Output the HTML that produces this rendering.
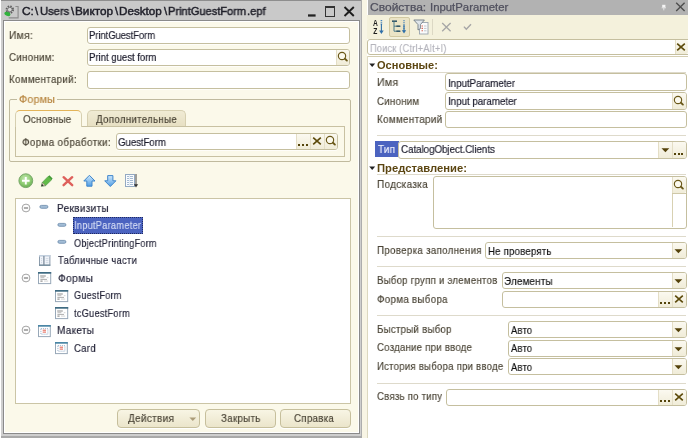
<!DOCTYPE html>
<html lang="ru"><head><meta charset="utf-8"><title>PrintGuestForm.epf</title>
<style>
html,body{margin:0;padding:0;background:#fff}
body{width:688px;height:438px;position:relative;overflow:hidden;font-family:"Liberation Sans",sans-serif}
body>div,body>svg,body>span{position:absolute}
.t{-webkit-text-stroke:0.18px currentColor;white-space:nowrap;line-height:16px;transform-origin:0 0;display:block;will-change:transform}
</style></head><body>
<div style="left:1px;top:0px;width:361px;height:438px;background:#cecece"></div>
<div style="left:1px;top:0px;width:361px;height:20px;background:#c9c9c9;border-top:1px solid #8e8e8e;box-sizing:border-box"></div>
<div style="left:360.6px;top:0px;width:1.4px;height:438px;background:#adadad"></div>
<div style="left:1px;top:436px;width:361px;height:2px;background:#a9a9a9"></div>
<div style="left:2.6px;top:19.6px;width:357.2px;height:414.6px;background:#fff;border:1.2px solid #8a8a8a;box-sizing:border-box"></div>
<div style="left:4.5px;top:21.5px;width:353.4px;height:410.8px;background:#fbf9ea"></div>
<div style="left:362.4px;top:0px;width:5px;height:438px;background:#f8f5e5"></div>
<div style="left:366.5px;top:56px;width:0.9px;height:382px;background:#dcd8c0"></div>
<svg style="left:4px;top:4px" width="16" height="16" viewBox="0 0 16 16">
<path d="M11.4 2.5h2.7v11.4h-9.4" fill="none" stroke="#8c8c8c" stroke-width="1.1"/>
<circle cx="5.8" cy="5.6" r="3.3" fill="none" stroke="#5e5e5e" stroke-width="1.9" stroke-dasharray="1.5 1.1"/>
<circle cx="5.8" cy="5.6" r="2.3" fill="#d4d4d4" stroke="#6c6c6c" stroke-width="0.9"/>
<ellipse cx="3.4" cy="9.9" rx="3.1" ry="2" fill="#30b23c" transform="rotate(20 3.4 9.9)"/>
</svg>
<span class="t" style="left:22.41px;top:3.00px;font-size:11.5px;color:#20202a;transform:scaleX(1.0313);-webkit-text-stroke:0.45px #20202a;">C:</span>
<span class="t" style="left:35.10px;top:3.00px;font-size:11.5px;color:#20202a;transform:scaleX(0.9938);-webkit-text-stroke:0.45px #20202a;">\</span>
<span class="t" style="left:39.76px;top:3.00px;font-size:11.5px;color:#20202a;transform:scaleX(0.9739);-webkit-text-stroke:0.45px #20202a;">Users</span>
<span class="t" style="left:70.65px;top:3.00px;font-size:11.5px;color:#20202a;transform:scaleX(0.9938);-webkit-text-stroke:0.45px #20202a;">\</span>
<span class="t" style="left:74.76px;top:3.00px;font-size:11.5px;color:#20202a;transform:scaleX(1.0233);-webkit-text-stroke:0.45px #20202a;">Виктор</span>
<span class="t" style="left:115.10px;top:3.00px;font-size:11.5px;color:#20202a;transform:scaleX(0.9938);-webkit-text-stroke:0.45px #20202a;">\</span>
<span class="t" style="left:119.27px;top:3.00px;font-size:11.5px;color:#20202a;transform:scaleX(1.0131);-webkit-text-stroke:0.45px #20202a;">Desktop</span>
<span class="t" style="left:164.35px;top:3.00px;font-size:11.5px;color:#20202a;transform:scaleX(0.9938);-webkit-text-stroke:0.45px #20202a;">\</span>
<span class="t" style="left:168.11px;top:3.00px;font-size:11.5px;color:#20202a;transform:scaleX(0.9632);-webkit-text-stroke:0.45px #20202a;">PrintGuestForm</span>
<span class="t" style="left:247.40px;top:3.00px;font-size:11.5px;color:#20202a;transform:scaleX(0.9686);-webkit-text-stroke:0.45px #20202a;">.epf</span>
<svg style="left:307px;top:13px" width="10" height="5" viewBox="0 0 10 5"><rect x="1" y="1.35" width="7.6" height="2.25" fill="#222"/></svg>
<div style="left:324.5px;top:6.4px;width:10.5px;height:10.5px;border:1px solid #333;border-top:2px solid #333;box-sizing:border-box"></div>
<svg style="left:343px;top:6px" width="12" height="11" viewBox="0 0 12 11"><path d="M1.5 1L10.8 10M10.8 1L1.5 10" stroke="#1e1e1e" stroke-width="1.9" fill="none"/></svg>
<span class="t" style="left:8.97px;top:27.00px;font-size:11.5px;color:#4c4638;transform:scaleX(0.8987);letter-spacing:0.3px;">Имя:</span>
<span class="t" style="left:8.51px;top:49.00px;font-size:11.5px;color:#4c4638;transform:scaleX(0.8498);letter-spacing:0.3px;">Синоним:</span>
<span class="t" style="left:8.51px;top:71.00px;font-size:11.5px;color:#4c4638;transform:scaleX(0.8570);letter-spacing:0.3px;">Комментарий:</span>
<div style="left:86.8px;top:26.5px;width:263.5px;height:17.7px;background:#fff;border:1px solid #c5bf9f;border-radius:3px;box-sizing:border-box;box-shadow:0 1px 0 rgba(255,255,255,.7)"></div>
<div style="left:86.8px;top:48.7px;width:263.5px;height:17.7px;background:#fff;border:1px solid #c5bf9f;border-radius:3px;box-sizing:border-box;box-shadow:0 1px 0 rgba(255,255,255,.7)"></div>
<div style="left:335.6px;top:49.7px;width:13.7px;height:15.7px;background:linear-gradient(#fbf9f0,#f0ecd8);border-left:1px solid #e4dec6;box-sizing:border-box;border-radius:0 2px 2px 0;"></div>
<svg style="left:335.50px;top:50.30px" width="13" height="13" viewBox="0 0 13 13"><circle cx="6" cy="6" r="3.65" fill="#fbf9ee" stroke="#6a5818" stroke-width="1.15"/><path d="M8.9 8.8L10.9 10.6" stroke="#6a5818" stroke-width="1.9" stroke-linecap="round"/></svg>
<div style="left:86.8px;top:70.9px;width:263.5px;height:17.7px;background:#fff;border:1px solid #c5bf9f;border-radius:3px;box-sizing:border-box;box-shadow:0 1px 0 rgba(255,255,255,.7)"></div>
<span class="t" style="left:89.24px;top:27.00px;font-size:11.5px;color:#1c1c2c;transform:scaleX(0.8284);letter-spacing:-0.1px;">PrintGuestForm</span>
<span class="t" style="left:89.22px;top:49.00px;font-size:11.5px;color:#1c1c2c;transform:scaleX(0.8472);letter-spacing:-0.1px;">Print guest form</span>
<div style="left:9.1px;top:99.4px;width:341.7px;height:62.4px;border:1px solid #c0ba9e;box-sizing:border-box;border-radius:2px"></div>
<div style="left:16.5px;top:95px;width:40px;height:10px;background:#fbf9ea"></div>
<span class="t" style="left:18.61px;top:91.00px;font-size:11px;color:#b7853f;transform:scaleX(0.9717);letter-spacing:0.2px;">Формы</span>
<div style="left:86.8px;top:110.2px;width:99.7px;height:17px;background:linear-gradient(#f0ebd4,#e6dfc2);border:1px solid #d6cfb0;border-bottom:none;border-radius:5px 5px 0 0;box-sizing:border-box"></div>
<div style="left:15.2px;top:125.9px;width:330px;height:31px;background:#fbf9ea;border:1px solid #c8c1a2;box-sizing:border-box"></div>
<div style="left:15.2px;top:109.8px;width:66.4px;height:17.2px;background:#fbf9ea;border:1px solid #d6cfb0;border-top:1.5px solid #e3b45a;border-bottom:none;border-radius:5px 5px 0 0;box-sizing:border-box"></div>
<span class="t" style="left:23.46px;top:111.00px;font-size:11.5px;color:#4c4638;transform:scaleX(0.8493);letter-spacing:0.3px;">Основные</span>
<span class="t" style="left:95.95px;top:111.00px;font-size:11.5px;color:#4c4638;transform:scaleX(0.8506);letter-spacing:0.3px;">Дополнительные</span>
<span class="t" style="left:21.75px;top:134.00px;font-size:11.5px;color:#4c4638;transform:scaleX(0.8694);letter-spacing:0.3px;">Форма обработки:</span>
<div style="left:115.8px;top:133.2px;width:222.7px;height:16.7px;background:#fff;border:1px solid #c5bf9f;border-radius:3px;box-sizing:border-box;box-shadow:0 1px 0 rgba(255,255,255,.7)"></div>
<div style="left:323.8px;top:134.2px;width:13.7px;height:14.7px;background:linear-gradient(#fbf9f0,#f0ecd8);border-left:1px solid #e4dec6;box-sizing:border-box;border-radius:0 2px 2px 0;"></div>
<svg style="left:323.70px;top:134.30px" width="13" height="13" viewBox="0 0 13 13"><circle cx="6" cy="6" r="3.65" fill="#fbf9ee" stroke="#6a5818" stroke-width="1.15"/><path d="M8.9 8.8L10.9 10.6" stroke="#6a5818" stroke-width="1.9" stroke-linecap="round"/></svg>
<div style="left:310.1px;top:134.2px;width:13.7px;height:14.7px;background:linear-gradient(#fbf9f0,#f0ecd8);border-left:1px solid #e4dec6;box-sizing:border-box;"></div>
<svg style="left:311.95px;top:136.15px" width="10" height="10" viewBox="0 0 10 10"><path d="M1.2 1.7L8.8 8.4M8.8 1.7L1.2 8.4" stroke="#5c4a0a" stroke-width="1.65" fill="none"/></svg>
<div style="left:296.40000000000003px;top:134.2px;width:13.7px;height:14.7px;background:linear-gradient(#fbf9f0,#f0ecd8);border-left:1px solid #e4dec6;box-sizing:border-box;"></div>
<div style="left:298.3500000000001px;top:143.89999999999998px;width:2.1px;height:2.1px;background:#54440a"></div>
<div style="left:302.05000000000007px;top:143.89999999999998px;width:2.1px;height:2.1px;background:#54440a"></div>
<div style="left:305.75000000000006px;top:143.89999999999998px;width:2.1px;height:2.1px;background:#54440a"></div>
<span class="t" style="left:118.21px;top:134.00px;font-size:11.5px;color:#1c1c2c;transform:scaleX(0.8442);letter-spacing:-0.1px;">GuestForm</span>
<svg style="left:18px;top:173px" width="16" height="16" viewBox="0 0 16 16">
<defs><radialGradient id="gg" cx="0.45" cy="0.35" r="0.75"><stop offset="0" stop-color="#c6eab4"/><stop offset="0.55" stop-color="#8ecb72"/><stop offset="1" stop-color="#5aa048"/></radialGradient></defs>
<circle cx="7.8" cy="7.7" r="6.9" fill="url(#gg)" stroke="#79a86a" stroke-width="1"/>
<path d="M7.8 3.9V11.5M4 7.7H11.6" stroke="#fff" stroke-width="1.9"/></svg>
<svg style="left:40px;top:174px" width="14" height="14" viewBox="0 0 14 14">
<path d="M1.4 12.2L2.4 8.4L8.2 2.4L11.8 5.6L5.6 11.6Z" fill="#62bb48" stroke="#43963a" stroke-width="0.7"/>
<path d="M8.2 2.4L9.4 1.3L12.6 4.4L11.8 5.6Z" fill="#3f9a34"/>
<path d="M1.4 12.2L2.4 8.4L5.6 11.6Z" fill="#d8d0b0" stroke="#666" stroke-width="0.4"/>
<path d="M1.4 12.2L2 10L3.6 11.6Z" fill="#222"/></svg>
<svg style="left:61px;top:175px" width="14" height="13" viewBox="0 0 14 13">
<path d="M2.6 2.2L11.2 10.2M11.2 2.2L2.6 10.2" stroke="#de605b" stroke-width="2.4" stroke-linecap="round" fill="none"/></svg>
<svg style="left:82px;top:174px" width="15" height="14" viewBox="0 0 15 14">
<defs><linearGradient id="bg1" x1="0" y1="0" x2="0" y2="1"><stop offset="0" stop-color="#cfe8fb"/><stop offset="1" stop-color="#4f9de4"/></linearGradient></defs>
<path d="M7.4 1.3L13 7H10V12.2H4.8V7H1.8Z" fill="url(#bg1)" stroke="#3f86cc" stroke-width="1" stroke-linejoin="round"/></svg>
<svg style="left:103px;top:174px" width="15" height="14" viewBox="0 0 15 14">
<path d="M7.3 12.5L12.9 6.8H9.9V1.6H4.7V6.8H1.7Z" fill="url(#bg1)" stroke="#3f86cc" stroke-width="1" stroke-linejoin="round"/></svg>
<svg style="left:124px;top:173px" width="15" height="16" viewBox="0 0 15 16">
<rect x="1.5" y="1.5" width="9" height="12" fill="#fafcfe" stroke="#93a9c2" stroke-width="1"/>
<path d="M3 3.5H9M3 5.5H9M3 7.5H9M3 9.5H9M3 11.5H9" stroke="#a4bad2" stroke-width="1"/>
<path d="M5.5 2V13" stroke="#e4ecf4" stroke-width="1"/>
<path d="M12 1V12" stroke="#555" stroke-width="1.1"/><path d="M9.9 11.2L12 14.6L14.1 11.2Z" fill="#333"/></svg>
<div style="left:14.6px;top:197.6px;width:336.3px;height:206.5px;background:#fff;border:1px solid #cbc5a6;box-sizing:border-box"></div>
<svg style="left:21.1px;top:202.8px" width="10" height="10" viewBox="0 0 10 10"><circle cx="5" cy="5" r="3.9" fill="#fdfdfd" stroke="#a4a4a4" stroke-width="1"/><path d="M2.9 5H7.1" stroke="#6e6e6e" stroke-width="1.1"/></svg>
<svg style="left:39.3px;top:204.4px" width="10" height="6" viewBox="0 0 10 6"><rect x="0.9" y="1.4" width="8" height="2.9" rx="1.45" fill="#a3bdd6" stroke="#6788aa" stroke-width="0.8"/></svg>
<span class="t" style="left:57.19px;top:200.00px;font-size:11.5px;color:#26263a;transform:scaleX(0.8786);letter-spacing:0.3px;">Реквизиты</span>
<div style="left:73.1px;top:217.3px;width:70.2px;height:16.4px;background:#4b63c0;outline:1px dotted #202a60;outline-offset:-1px"></div>
<svg style="left:57px;top:222px" width="10" height="6" viewBox="0 0 10 6"><rect x="0.9" y="1.4" width="8" height="2.9" rx="1.45" fill="#a3bdd6" stroke="#6788aa" stroke-width="0.8"/></svg>
<span class="t" style="left:74.47px;top:217.00px;font-size:11.5px;color:#d4dcf4;transform:scaleX(0.8050);letter-spacing:0.3px;">InputParameter</span>
<svg style="left:57px;top:239.2px" width="10" height="6" viewBox="0 0 10 6"><rect x="0.9" y="1.4" width="8" height="2.9" rx="1.45" fill="#a3bdd6" stroke="#6788aa" stroke-width="0.8"/></svg>
<span class="t" style="left:74.09px;top:235.00px;font-size:11.5px;color:#26263a;transform:scaleX(0.7920);letter-spacing:0.3px;">ObjectPrintingForm</span>
<svg style="left:39px;top:255.4px" width="13" height="12" viewBox="0 0 13 12"><rect x="0.5" y="0.5" width="10.4" height="9.6" fill="#f1f4f9" stroke="#8c9cac" stroke-width="1"/><rect x="0" y="0" width="11.4" height="1.6" fill="#c3d0de"/><path d="M0 10.2H11.4" stroke="#5f7d8e" stroke-width="1"/><path d="M4.9 1V10" stroke="#7c8c9c" stroke-width="1.3"/><path d="M6.8 3.6H9.4M6.8 5.6H9.4M6.8 7.6H9.4" stroke="#cdd6e2" stroke-width="0.9"/><path d="M2.6 3.2V8.4" stroke="#c4cedc" stroke-width="1" stroke-dasharray="1 1"/></svg>
<span class="t" style="left:58.31px;top:252.00px;font-size:11.5px;color:#26263a;transform:scaleX(0.8181);letter-spacing:0.3px;">Табличные части</span>
<svg style="left:21.1px;top:272.7px" width="10" height="10" viewBox="0 0 10 10"><circle cx="5" cy="5" r="3.9" fill="#fdfdfd" stroke="#a4a4a4" stroke-width="1"/><path d="M2.9 5H7.1" stroke="#6e6e6e" stroke-width="1.1"/></svg>
<svg style="left:38px;top:272.2px" width="14" height="13" viewBox="0 0 14 13"><rect x="0.5" y="0.6" width="12.2" height="11" fill="#fff" stroke="#98a8b8" stroke-width="1"/><rect x="0" y="0" width="13.2" height="1.7" fill="#3f6b82"/><path d="M2.2 4H7.8" stroke="#8c8c8c" stroke-width="1"/><path d="M2.4 5.7H6.4" stroke="#b4b4b4" stroke-width="0.9"/><path d="M2.4 7.4H9" stroke="#a4a4a4" stroke-width="0.9"/><path d="M2.4 9.1H4.6" stroke="#6c6c6c" stroke-width="0.9"/><path d="M6 9.1H10.2M8.8 5.7H10.4" stroke="#cfcfcf" stroke-width="0.9"/></svg>
<span class="t" style="left:57.93px;top:270.00px;font-size:11.5px;color:#26263a;transform:scaleX(0.8938);letter-spacing:0.3px;">Формы</span>
<svg style="left:55px;top:289.6px" width="14" height="13" viewBox="0 0 14 13"><rect x="0.5" y="0.6" width="12.2" height="11" fill="#fff" stroke="#98a8b8" stroke-width="1"/><rect x="0" y="0" width="13.2" height="1.7" fill="#3f6b82"/><path d="M2.2 4H7.8" stroke="#8c8c8c" stroke-width="1"/><path d="M2.4 5.7H6.4" stroke="#b4b4b4" stroke-width="0.9"/><path d="M2.4 7.4H9" stroke="#a4a4a4" stroke-width="0.9"/><path d="M2.4 9.1H4.6" stroke="#6c6c6c" stroke-width="0.9"/><path d="M6 9.1H10.2M8.8 5.7H10.4" stroke="#cfcfcf" stroke-width="0.9"/></svg>
<span class="t" style="left:74.05px;top:287.00px;font-size:11.5px;color:#26263a;transform:scaleX(0.7896);letter-spacing:0.3px;">GuestForm</span>
<svg style="left:55px;top:307px" width="14" height="13" viewBox="0 0 14 13"><rect x="0.5" y="0.6" width="12.2" height="11" fill="#fff" stroke="#98a8b8" stroke-width="1"/><rect x="0" y="0" width="13.2" height="1.7" fill="#3f6b82"/><path d="M2.2 4H7.8" stroke="#8c8c8c" stroke-width="1"/><path d="M2.4 5.7H6.4" stroke="#b4b4b4" stroke-width="0.9"/><path d="M2.4 7.4H9" stroke="#a4a4a4" stroke-width="0.9"/><path d="M2.4 9.1H4.6" stroke="#6c6c6c" stroke-width="0.9"/><path d="M6 9.1H10.2M8.8 5.7H10.4" stroke="#cfcfcf" stroke-width="0.9"/></svg>
<span class="t" style="left:74.36px;top:305.00px;font-size:11.5px;color:#26263a;transform:scaleX(0.8023);letter-spacing:0.3px;">tcGuestForm</span>
<svg style="left:21.1px;top:325.3px" width="10" height="10" viewBox="0 0 10 10"><circle cx="5" cy="5" r="3.9" fill="#fdfdfd" stroke="#a4a4a4" stroke-width="1"/><path d="M2.9 5H7.1" stroke="#6e6e6e" stroke-width="1.1"/></svg>
<svg style="left:38px;top:324.6px" width="14" height="13" viewBox="0 0 14 13"><rect x="0.5" y="0.6" width="11.8" height="11" fill="#fff" stroke="#98a8b8" stroke-width="1"/><rect x="0" y="0" width="12.8" height="1.7" fill="#4a86a6"/><rect x="2.9" y="3.6" width="7" height="5.6" fill="none" stroke="#7f9cbc" stroke-width="0.9" stroke-dasharray="0.9 1.1"/><path d="M4.7 5.2H8M4.7 7.1H8" stroke="#e25444" stroke-width="0.95"/></svg>
<span class="t" style="left:57.20px;top:322.00px;font-size:11.5px;color:#26263a;transform:scaleX(0.8719);letter-spacing:0.3px;">Макеты</span>
<svg style="left:55.2px;top:342px" width="14" height="13" viewBox="0 0 14 13"><rect x="0.5" y="0.6" width="11.8" height="11" fill="#fff" stroke="#98a8b8" stroke-width="1"/><rect x="0" y="0" width="12.8" height="1.7" fill="#4a86a6"/><rect x="2.9" y="3.6" width="7" height="5.6" fill="none" stroke="#7f9cbc" stroke-width="0.9" stroke-dasharray="0.9 1.1"/><path d="M4.7 5.2H8M4.7 7.1H8" stroke="#e25444" stroke-width="0.95"/></svg>
<span class="t" style="left:74.02px;top:340.00px;font-size:11.5px;color:#26263a;transform:scaleX(0.8356);letter-spacing:0.3px;">Card</span>
<div style="left:116.9px;top:409.1px;width:83px;height:18.6px;background:linear-gradient(#f8f5e4,#ebe5cb);border:1px solid #c6bf9c;border-radius:4px;box-sizing:border-box;box-shadow:0 1px 0 #fff"></div>
<span class="t" style="left:128.25px;top:410.00px;font-size:11.5px;color:#4c4638;transform:scaleX(0.8768);letter-spacing:0.3px;">Действия</span>
<svg style="left:189px;top:417px" width="8" height="5" viewBox="0 0 8 5"><path d="M0.4 0.5H7.2L3.8 4Z" fill="#ab9c78"/></svg>
<div style="left:205.3px;top:409.1px;width:71.1px;height:18.6px;background:linear-gradient(#f8f5e4,#ebe5cb);border:1px solid #c6bf9c;border-radius:4px;box-sizing:border-box;box-shadow:0 1px 0 #fff"></div>
<span class="t" style="left:221.21px;top:410.00px;font-size:11.5px;color:#4c4638;transform:scaleX(0.8549);letter-spacing:0.3px;">Закрыть</span>
<div style="left:280.1px;top:409.1px;width:70.8px;height:18.6px;background:linear-gradient(#f8f5e4,#ebe5cb);border:1px solid #c6bf9c;border-radius:4px;box-sizing:border-box;box-shadow:0 1px 0 #fff"></div>
<span class="t" style="left:294.21px;top:410.00px;font-size:11.5px;color:#4c4638;transform:scaleX(0.8477);letter-spacing:0.3px;">Справка</span>
<div style="left:368.2px;top:0px;width:320px;height:15.3px;background:#b2b2b2"></div>
<span class="t" style="left:370.20px;top:-1.00px;font-size:11px;color:#50505e;transform:scaleX(1.0937);-webkit-text-stroke:0.25px #50505e;">Свойства:</span>
<span class="t" style="left:429.98px;top:-1.00px;font-size:11px;color:#50505e;transform:scaleX(1.0323);-webkit-text-stroke:0.25px #50505e;">InputParameter</span>
<svg style="left:661px;top:4px" width="6" height="7" viewBox="0 0 6 7"><path d="M1.2 0.8H4.4V3.6H1.2Z" fill="#f4f4f4"/><path d="M0.6 3.8H5M2.8 3.8V6.4" stroke="#e8e8e8" stroke-width="0.9"/></svg>
<svg style="left:675px;top:2px" width="11" height="10" viewBox="0 0 11 10"><path d="M1.2 0.8L9.6 9M9.6 0.8L1.2 9" stroke="#4e4e4e" stroke-width="1.4" fill="none"/></svg>
<div style="left:367.4px;top:15.3px;width:320.6px;height:23.5px;background:#f4f1dc"></div>
<svg style="left:372px;top:19px;will-change:transform" width="14" height="16" viewBox="0 0 14 16">
<text x="1.2" y="6.8" font-family="Liberation Sans, sans-serif" font-size="8.6" font-weight="bold" fill="#1c1c1c" transform="scale(0.78 1)">A</text>
<text x="1.6" y="14.9" font-family="Liberation Sans, sans-serif" font-size="8.6" font-weight="bold" fill="#1c1c1c" transform="scale(0.78 1)">Z</text>
<path d="M9.4 1V5.4" stroke="#4a86bc" stroke-width="1.6" stroke-dasharray="1 0.8"/><path d="M9.4 5V13" stroke="#2f6fa8" stroke-width="1.1"/><path d="M7.1 11.6L9.4 15L11.7 11.6Z" fill="#2f6fa8"/></svg>
<div style="left:388.8px;top:16.5px;width:21.1px;height:20.6px;background:#ebe4c6;border:1px solid #d2c9a2;box-sizing:border-box;border-radius:2px"></div>
<svg style="left:391px;top:19px" width="17" height="16" viewBox="0 0 17 16">
<path d="M1 2.2H6" stroke="#33586a" stroke-width="1.6"/><path d="M3 2.5V12.2H8.6M3 7.2H8.6" stroke="#4a7a8a" stroke-width="1" fill="none"/>
<path d="M5.4 7.2H9.4M5.4 12.2H9.4" stroke="#33586a" stroke-width="1.6"/>
<path d="M13 1V13" stroke="#3f7fb8" stroke-width="1.1" stroke-dasharray="1.2 0.8"/><path d="M13 6V13" stroke="#2f6fa8" stroke-width="1.1"/><path d="M10.8 11.2L13 14.6L15.2 11.2Z" fill="#2f6fa8"/></svg>
<svg style="left:413px;top:19px" width="16" height="16" viewBox="0 0 16 16">
<rect x="6.5" y="3.5" width="8.5" height="11.5" fill="#fbfbfb" stroke="#9aa4ae" stroke-width="0.9"/>
<path d="M8.5 7H10M8.5 9.4H10M8.5 11.8H10" stroke="#d86a5a" stroke-width="1.1"/><path d="M11 7H13.5M11 9.4H13.5M11 11.8H13.5" stroke="#c0c8d0" stroke-width="1"/>
<path d="M0.8 1H11.4L7.4 5.6V9.6L5 11V5.6Z" fill="#dfe5ea" stroke="#6f7a84" stroke-width="0.9" stroke-linejoin="round"/></svg>
<div style="left:432px;top:19px;width:1px;height:16px;background:#dcd8c4"></div>
<svg style="left:441px;top:22px" width="11" height="10" viewBox="0 0 11 10"><path d="M1.2 1L9.6 9.2M9.6 1L1.2 9.2" stroke="#a6a6a6" stroke-width="1.3" fill="none"/></svg>
<svg style="left:463px;top:23px" width="9" height="8" viewBox="0 0 9 8"><path d="M0.9 3.6L3.3 6.2L8 1.2" stroke="#a6a6a6" stroke-width="1.4" fill="none"/></svg>
<div style="left:367.5px;top:38.8px;width:320.5px;height:17.2px;background:#fff"></div>
<div style="left:367.3px;top:39.3px;width:323.9px;height:15.6px;background:#fff;border:1px solid #c5bf9f;border-radius:3px;box-sizing:border-box;box-shadow:0 1px 0 rgba(255,255,255,.7)"></div>
<div style="left:674.5px;top:40.3px;width:13.7px;height:13.6px;background:linear-gradient(#fbf9f0,#f0ecd8);border-left:1px solid #e4dec6;box-sizing:border-box;border-radius:0 2px 2px 0;"></div>
<svg style="left:676.35px;top:41.70px" width="10" height="10" viewBox="0 0 10 10"><path d="M1.2 1.7L8.8 8.4M8.8 1.7L1.2 8.4" stroke="#5c4a0a" stroke-width="1.65" fill="none"/></svg>
<span class="t" style="left:370.07px;top:40.00px;font-size:11.5px;color:#b4b4bc;transform:scaleX(0.7965);letter-spacing:0.3px;">Поиск (Ctrl+Alt+I)</span>
<div style="left:367.5px;top:55.5px;width:320.5px;height:1px;background:#d4cdb0"></div>
<svg style="left:369.4px;top:63.4px" width="7" height="5" viewBox="0 0 7 5"><path d="M0.2 0.5H6.2L3.2 4Z" fill="#222"/></svg>
<span class="t" style="left:376.66px;top:57.00px;font-size:11px;color:#5c4612;font-weight:bold;transform:scaleX(1.0037);-webkit-text-stroke:0;">Основные:</span>
<div style="left:377px;top:71.9px;width:308.5px;height:1px;background:#dedacb"></div>
<span class="t" style="left:376.55px;top:74.00px;font-size:11.5px;color:#4c4638;transform:scaleX(0.9202);letter-spacing:0.3px;">Имя</span>
<span class="t" style="left:376.51px;top:93.00px;font-size:11.5px;color:#4c4638;transform:scaleX(0.8435);letter-spacing:0.3px;">Синоним</span>
<span class="t" style="left:376.61px;top:111.00px;font-size:11.5px;color:#4c4638;transform:scaleX(0.8640);letter-spacing:0.3px;">Комментарий</span>
<div style="left:445.2px;top:73.3px;width:241.40000000000003px;height:17.6px;background:#fff;border:1px solid #c5bf9f;border-radius:3px;box-sizing:border-box;box-shadow:0 1px 0 rgba(255,255,255,.7)"></div>
<div style="left:445.2px;top:92.0px;width:241.40000000000003px;height:17.8px;background:#fff;border:1px solid #c5bf9f;border-radius:3px;box-sizing:border-box;box-shadow:0 1px 0 rgba(255,255,255,.7)"></div>
<div style="left:671.9px;top:93.0px;width:13.7px;height:15.8px;background:linear-gradient(#fbf9f0,#f0ecd8);border-left:1px solid #e4dec6;box-sizing:border-box;border-radius:0 2px 2px 0;"></div>
<svg style="left:671.80px;top:93.65px" width="13" height="13" viewBox="0 0 13 13"><circle cx="6" cy="6" r="3.65" fill="#fbf9ee" stroke="#6a5818" stroke-width="1.15"/><path d="M8.9 8.8L10.9 10.6" stroke="#6a5818" stroke-width="1.9" stroke-linecap="round"/></svg>
<div style="left:445.2px;top:111.0px;width:241.40000000000003px;height:17px;background:#fff;border:1px solid #c5bf9f;border-radius:3px;box-sizing:border-box;box-shadow:0 1px 0 rgba(255,255,255,.7)"></div>
<span class="t" style="left:448.11px;top:75.00px;font-size:11.5px;color:#1c1c2c;transform:scaleX(0.8595);letter-spacing:-0.1px;">InputParameter</span>
<span class="t" style="left:448.11px;top:93.00px;font-size:11.5px;color:#1c1c2c;transform:scaleX(0.8615);letter-spacing:-0.1px;">Input parameter</span>
<div style="left:377px;top:135.3px;width:308.5px;height:1px;background:#dedacb"></div>
<div style="left:375.3px;top:141px;width:23.3px;height:15.8px;background:#4b63c0"></div>
<span class="t" style="left:378.10px;top:141.00px;font-size:11px;color:#f0f2fc;transform:scaleX(0.8954);letter-spacing:0.3px;">Тип</span>
<div style="left:398.2px;top:141.1px;width:288.40000000000003px;height:17.6px;background:#fff;border:1px solid #c5bf9f;border-radius:3px;box-sizing:border-box;box-shadow:0 1px 0 rgba(255,255,255,.7)"></div>
<div style="left:671.9px;top:142.1px;width:13.7px;height:15.600000000000001px;background:linear-gradient(#fbf9f0,#f0ecd8);border-left:1px solid #e4dec6;box-sizing:border-box;border-radius:0 2px 2px 0;"></div>
<div style="left:673.85px;top:152.7px;width:2.1px;height:2.1px;background:#54440a"></div>
<div style="left:677.5500000000001px;top:152.7px;width:2.1px;height:2.1px;background:#54440a"></div>
<div style="left:681.25px;top:152.7px;width:2.1px;height:2.1px;background:#54440a"></div>
<div style="left:658.1999999999999px;top:142.1px;width:13.7px;height:15.600000000000001px;background:linear-gradient(#fbf9f0,#f0ecd8);border-left:1px solid #e4dec6;box-sizing:border-box;"></div>
<svg style="left:660.55px;top:148.30px" width="9" height="5" viewBox="0 0 9 5"><path d="M0.5 0.3H8.3L4.4 4.3Z" fill="#54420a"/></svg>
<span class="t" style="left:401.11px;top:141.00px;font-size:11.5px;color:#1c1c2c;transform:scaleX(0.8593);letter-spacing:-0.1px;">CatalogObject.Clients</span>
<svg style="left:369.4px;top:165.8px" width="7" height="5" viewBox="0 0 7 5"><path d="M0.2 0.5H6.2L3.2 4Z" fill="#222"/></svg>
<span class="t" style="left:376.67px;top:160.00px;font-size:11px;color:#5c4612;font-weight:bold;transform:scaleX(1.0216);-webkit-text-stroke:0;">Представление:</span>
<div style="left:377px;top:174.2px;width:308.5px;height:1px;background:#dedacb"></div>
<span class="t" style="left:376.99px;top:176.00px;font-size:11.5px;color:#4c4638;transform:scaleX(0.8768);letter-spacing:0.3px;">Подсказка</span>
<div style="left:432.6px;top:175.6px;width:254.0px;height:53px;background:#fff;border:1px solid #c5bf9f;border-radius:3px;box-sizing:border-box"></div>
<div style="left:672.2px;top:177px;width:1px;height:50px;background:#d8d1b2"></div>
<div style="left:672.2px;top:176.6px;width:13.7px;height:16.4px;background:linear-gradient(#fbf9f0,#f0ecd8);border-left:1px solid #e4dec6;box-sizing:border-box;border-radius:0 2px 2px 0;"></div>
<svg style="left:672.10px;top:177.55px" width="13" height="13" viewBox="0 0 13 13"><circle cx="6" cy="6" r="3.65" fill="#fbf9ee" stroke="#6a5818" stroke-width="1.15"/><path d="M8.9 8.8L10.9 10.6" stroke="#6a5818" stroke-width="1.9" stroke-linecap="round"/></svg>
<div style="left:672.2px;top:193px;width:13.7px;height:1px;background:#cfc8a8"></div>
<div style="left:377px;top:235.9px;width:308.5px;height:1px;background:#dedacb"></div>
<span class="t" style="left:377.01px;top:242.00px;font-size:11.5px;color:#4c4638;transform:scaleX(0.8535);letter-spacing:0.3px;">Проверка заполнения</span>
<div style="left:484.9px;top:241.5px;width:201.70000000000005px;height:17.8px;background:#fff;border:1px solid #c5bf9f;border-radius:3px;box-sizing:border-box;box-shadow:0 1px 0 rgba(255,255,255,.7)"></div>
<div style="left:671.9px;top:242.5px;width:13.7px;height:15.8px;background:linear-gradient(#fbf9f0,#f0ecd8);border-left:1px solid #e4dec6;box-sizing:border-box;border-radius:0 2px 2px 0;"></div>
<svg style="left:674.25px;top:248.80px" width="9" height="5" viewBox="0 0 9 5"><path d="M0.5 0.3H8.3L4.4 4.3Z" fill="#54420a"/></svg>
<span class="t" style="left:488.04px;top:243.00px;font-size:11.5px;color:#111;transform:scaleX(0.8313);letter-spacing:0.3px;">Не проверять</span>
<div style="left:377px;top:265.9px;width:308.5px;height:1px;background:#dedacb"></div>
<span class="t" style="left:376.83px;top:272.00px;font-size:11.5px;color:#4c4638;transform:scaleX(0.8376);letter-spacing:0.3px;">Выбор групп и элементов</span>
<div style="left:501.9px;top:271.9px;width:184.70000000000005px;height:17.6px;background:#fff;border:1px solid #c5bf9f;border-radius:3px;box-sizing:border-box;box-shadow:0 1px 0 rgba(255,255,255,.7)"></div>
<div style="left:671.9px;top:272.9px;width:13.7px;height:15.600000000000001px;background:linear-gradient(#fbf9f0,#f0ecd8);border-left:1px solid #e4dec6;box-sizing:border-box;border-radius:0 2px 2px 0;"></div>
<svg style="left:674.25px;top:279.10px" width="9" height="5" viewBox="0 0 9 5"><path d="M0.5 0.3H8.3L4.4 4.3Z" fill="#54420a"/></svg>
<span class="t" style="left:504.11px;top:273.00px;font-size:11.5px;color:#111;transform:scaleX(0.8476);letter-spacing:0.3px;">Элементы</span>
<span class="t" style="left:377.46px;top:291.00px;font-size:11.5px;color:#4c4638;transform:scaleX(0.8559);letter-spacing:0.3px;">Форма выбора</span>
<div style="left:501.9px;top:290.9px;width:184.70000000000005px;height:17.2px;background:#fff;border:1px solid #c5bf9f;border-radius:3px;box-sizing:border-box;box-shadow:0 1px 0 rgba(255,255,255,.7)"></div>
<div style="left:671.9px;top:291.9px;width:13.7px;height:15.2px;background:linear-gradient(#fbf9f0,#f0ecd8);border-left:1px solid #e4dec6;box-sizing:border-box;border-radius:0 2px 2px 0;"></div>
<svg style="left:673.75px;top:294.10px" width="10" height="10" viewBox="0 0 10 10"><path d="M1.2 1.7L8.8 8.4M8.8 1.7L1.2 8.4" stroke="#5c4a0a" stroke-width="1.65" fill="none"/></svg>
<div style="left:658.1999999999999px;top:291.9px;width:13.7px;height:15.2px;background:linear-gradient(#fbf9f0,#f0ecd8);border-left:1px solid #e4dec6;box-sizing:border-box;"></div>
<div style="left:660.15px;top:302.09999999999997px;width:2.1px;height:2.1px;background:#54440a"></div>
<div style="left:663.85px;top:302.09999999999997px;width:2.1px;height:2.1px;background:#54440a"></div>
<div style="left:667.55px;top:302.09999999999997px;width:2.1px;height:2.1px;background:#54440a"></div>
<div style="left:377px;top:315.0px;width:308.5px;height:1px;background:#dedacb"></div>
<span class="t" style="left:376.82px;top:321.00px;font-size:11.5px;color:#4c4638;transform:scaleX(0.8428);letter-spacing:0.3px;">Быстрый выбор</span>
<span class="t" style="left:376.52px;top:339.00px;font-size:11.5px;color:#4c4638;transform:scaleX(0.8351);letter-spacing:0.3px;">Создание при вводе</span>
<span class="t" style="left:376.83px;top:358.00px;font-size:11.5px;color:#4c4638;transform:scaleX(0.8320);letter-spacing:0.3px;">История выбора при вводе</span>
<div style="left:508.1px;top:320.8px;width:178.5px;height:17.2px;background:#fff;border:1px solid #c5bf9f;border-radius:3px;box-sizing:border-box;box-shadow:0 1px 0 rgba(255,255,255,.7)"></div>
<div style="left:671.9px;top:321.8px;width:13.7px;height:15.2px;background:linear-gradient(#fbf9f0,#f0ecd8);border-left:1px solid #e4dec6;box-sizing:border-box;border-radius:0 2px 2px 0;"></div>
<svg style="left:674.25px;top:327.80px" width="9" height="5" viewBox="0 0 9 5"><path d="M0.5 0.3H8.3L4.4 4.3Z" fill="#54420a"/></svg>
<div style="left:508.1px;top:339.5px;width:178.5px;height:17.2px;background:#fff;border:1px solid #c5bf9f;border-radius:3px;box-sizing:border-box;box-shadow:0 1px 0 rgba(255,255,255,.7)"></div>
<div style="left:671.9px;top:340.5px;width:13.7px;height:15.2px;background:linear-gradient(#fbf9f0,#f0ecd8);border-left:1px solid #e4dec6;box-sizing:border-box;border-radius:0 2px 2px 0;"></div>
<svg style="left:674.25px;top:346.50px" width="9" height="5" viewBox="0 0 9 5"><path d="M0.5 0.3H8.3L4.4 4.3Z" fill="#54420a"/></svg>
<div style="left:508.1px;top:357.8px;width:178.5px;height:17.2px;background:#fff;border:1px solid #c5bf9f;border-radius:3px;box-sizing:border-box;box-shadow:0 1px 0 rgba(255,255,255,.7)"></div>
<div style="left:671.9px;top:358.8px;width:13.7px;height:15.2px;background:linear-gradient(#fbf9f0,#f0ecd8);border-left:1px solid #e4dec6;box-sizing:border-box;border-radius:0 2px 2px 0;"></div>
<svg style="left:674.25px;top:364.80px" width="9" height="5" viewBox="0 0 9 5"><path d="M0.5 0.3H8.3L4.4 4.3Z" fill="#54420a"/></svg>
<span class="t" style="left:511.40px;top:322.00px;font-size:11.5px;color:#111;transform:scaleX(0.8114);letter-spacing:0.3px;">Авто</span>
<span class="t" style="left:511.40px;top:340.00px;font-size:11.5px;color:#111;transform:scaleX(0.8114);letter-spacing:0.3px;">Авто</span>
<span class="t" style="left:511.40px;top:359.00px;font-size:11.5px;color:#111;transform:scaleX(0.8114);letter-spacing:0.3px;">Авто</span>
<div style="left:377px;top:382.7px;width:308.5px;height:1px;background:#dedacb"></div>
<span class="t" style="left:376.52px;top:388.00px;font-size:11.5px;color:#4c4638;transform:scaleX(0.8337);letter-spacing:0.3px;">Связь по типу</span>
<div style="left:445.5px;top:388.5px;width:241.10000000000002px;height:17.4px;background:#fff;border:1px solid #c5bf9f;border-radius:3px;box-sizing:border-box;box-shadow:0 1px 0 rgba(255,255,255,.7)"></div>
<div style="left:671.9px;top:389.5px;width:13.7px;height:15.399999999999999px;background:linear-gradient(#fbf9f0,#f0ecd8);border-left:1px solid #e4dec6;box-sizing:border-box;border-radius:0 2px 2px 0;"></div>
<svg style="left:673.75px;top:391.80px" width="10" height="10" viewBox="0 0 10 10"><path d="M1.2 1.7L8.8 8.4M8.8 1.7L1.2 8.4" stroke="#5c4a0a" stroke-width="1.65" fill="none"/></svg>
<div style="left:658.1999999999999px;top:389.5px;width:13.7px;height:15.399999999999999px;background:linear-gradient(#fbf9f0,#f0ecd8);border-left:1px solid #e4dec6;box-sizing:border-box;"></div>
<div style="left:660.15px;top:399.9px;width:2.1px;height:2.1px;background:#54440a"></div>
<div style="left:663.85px;top:399.9px;width:2.1px;height:2.1px;background:#54440a"></div>
<div style="left:667.55px;top:399.9px;width:2.1px;height:2.1px;background:#54440a"></div>
</body></html>
